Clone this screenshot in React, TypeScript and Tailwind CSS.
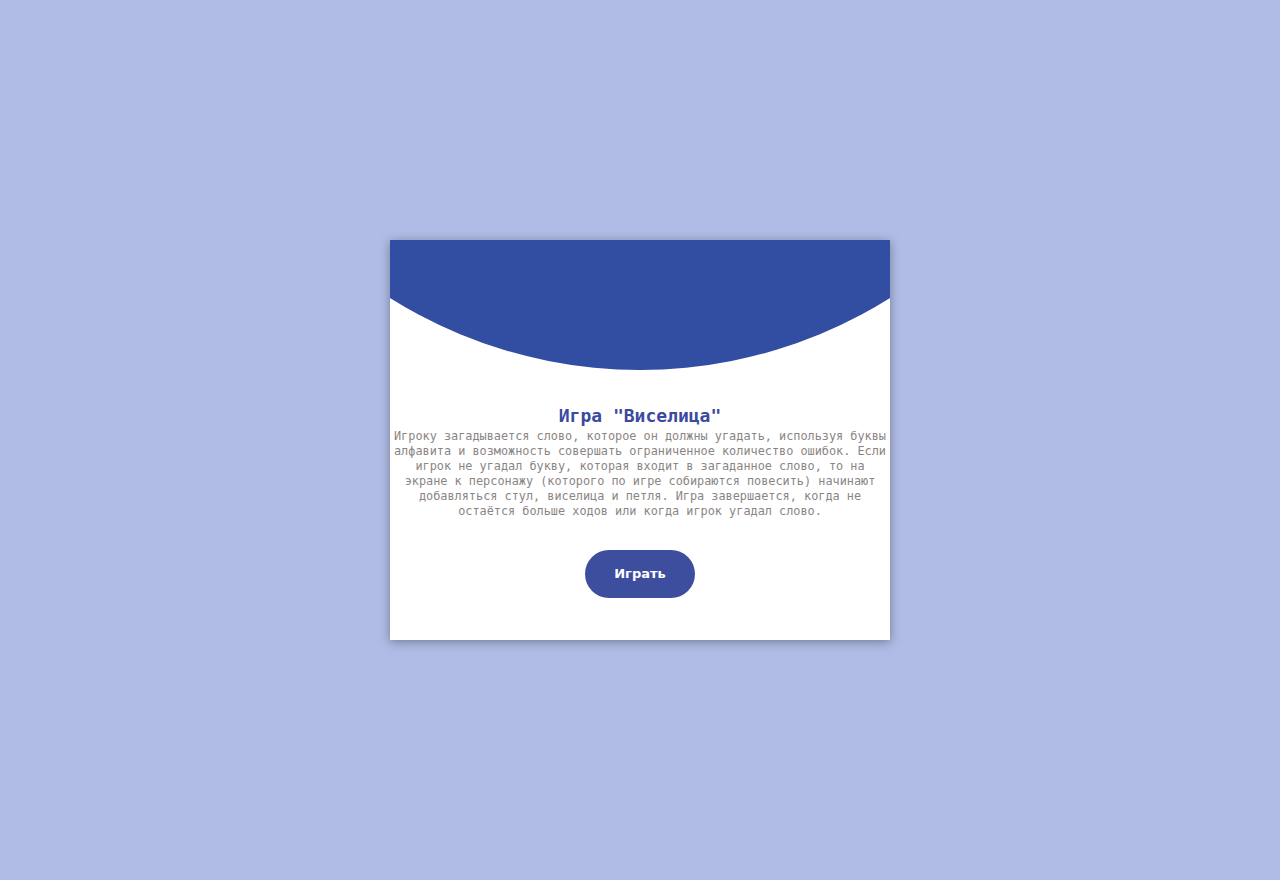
export default function App() {
  return (
    <div className="flex min-h-[880px] w-full items-center justify-center bg-[#b0bce6]">
      <div className="flex h-[400px] w-[500px] flex-col items-center overflow-hidden bg-white shadow-[0_2px_10px_rgba(0,0,0,0.35)]">
        {/* header curve */}
        <svg width="500" height="130" viewBox="0 0 500 130" className="block shrink-0">
          <circle cx="250" cy="-340" r="470" fill="#324ea3" />
        </svg>

        <h1 className="mt-[35px] text-center font-['DejaVu_Sans_Mono',monospace] text-[18px] font-bold leading-[22px] text-[#3b4a9e]">
          Игра "Виселица"
        </h1>
        <p className="mt-[2px] w-[496px] text-center font-['DejaVu_Sans_Mono',monospace] text-[11.85px] leading-[15px] text-[#8a8585]">
          Игроку загадывается слово, которое он должны угадать, используя буквы алфавита и возможность совершать ограниченное количество ошибок. Если игрок не угадал букву, которая входит в загаданное слово, то на экране к персонажу (которого по игре собираются повесить) начинают добавляться стул, виселица и петля. Игра завершается, когда не остаётся больше ходов или когда игрок угадал слово.
        </p>

        <button className="mt-[31px] h-[48px] w-[110px] rounded-full bg-[#3d4e9f] font-['DejaVu_Sans',sans-serif] text-[13px] font-bold text-white">
          Играть
        </button>
      </div>
    </div>
  )
}
